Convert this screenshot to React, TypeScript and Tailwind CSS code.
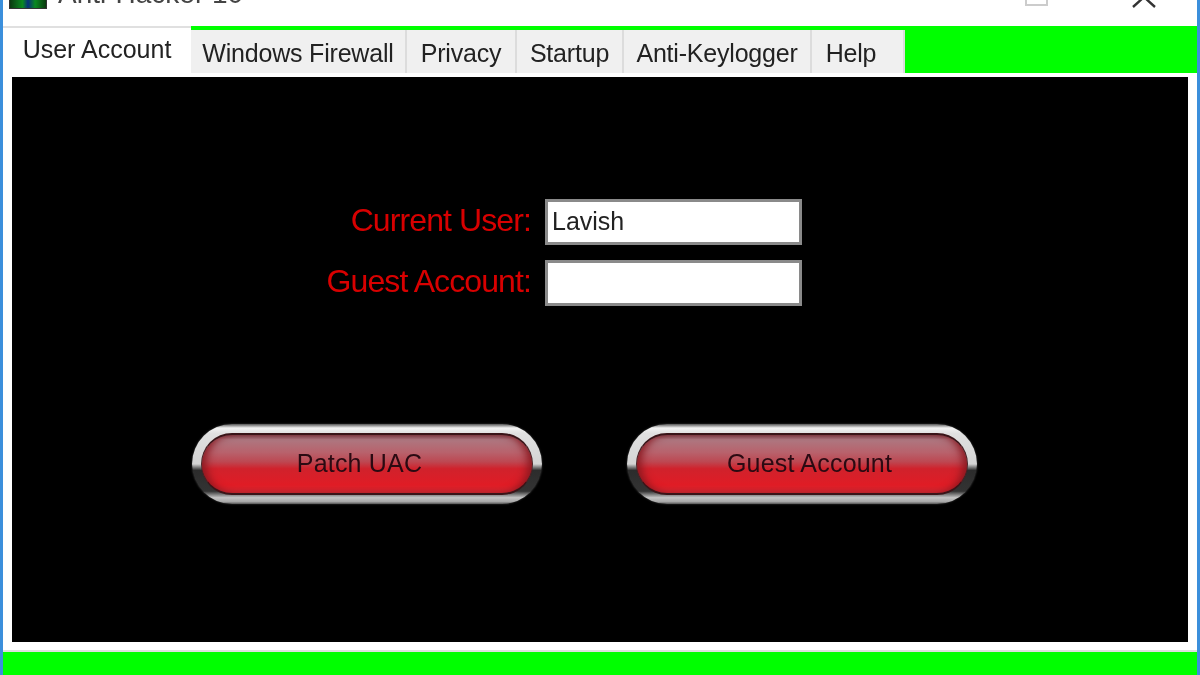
const tabs = [
  { label: "Windows Firewall", width: "w-[216px]", pad: "pr-0" },
  { label: "Privacy", width: "w-[110px]", pad: "pr-0" },
  { label: "Startup", width: "w-[107px]", pad: "pr-0" },
  { label: "Anti-Keylogger", width: "w-[188px]", pad: "pr-0" },
  { label: "Help", width: "w-[93px]", pad: "pr-[13px]" },
];

const GlossyButton = ({ label, className }: { label: string; className: string }) => (
  <button className="w-[350px] h-[80px] rounded-[40px] p-[9px] bg-[linear-gradient(180deg,#555_0%,#f2f2f2_5%,#e0e0e0_12%,#d4d4d4_50%,#2c2c2c_58%,#333_84%,#c4c4c4_92%,#a8a8a8_97%,#555_100%)] shadow-[0_0_2px_#444]">
    <span
      className={`flex items-center justify-center w-full h-full rounded-[31px] border-y-2 border-x border-y-[#3a1418] border-x-[#4a2024] bg-[linear-gradient(180deg,#7a4a52_0%,#ad7780_8%,#b8626c_30%,#bd4852_46%,#d0222c_58%,#e01c25_86%,#d02a32_100%)] shadow-[inset_8px_0_8px_-4px_#8a1820,inset_-8px_0_8px_-4px_#8a1820] text-[25px] tracking-[0.2px] text-[#2a0a12] ${className}`}
    >
      {label}
    </span>
  </button>
);

export default function App() {
  return (
    <div className="w-[1200px] h-[675px] overflow-hidden flex flex-col bg-white border-x-[3px] border-[#3b8fdc] font-['Liberation_Sans',sans-serif] blur-[0.5px]">
      <header className="h-[26px] shrink-0 relative overflow-hidden">
        <div className="absolute left-[6px] top-[-14px] w-[38px] h-[23px] border border-[#333] bg-[linear-gradient(90deg,#0a3a10,#0a8a20_35%,#06307a_50%,#0a8a20_70%,#0a3a10)]" />
        <span className="absolute left-[55px] top-[-24px] text-[28px] leading-[36px] text-[#444]">Anti-Hacker 10</span>
        <span className="absolute left-[1022px] top-[-15px] w-[23px] h-[21px] border-2 border-[#ccc]" />
        <svg className="absolute left-[1128px] top-[-9px]" width="26" height="18" viewBox="0 0 26 18">
          <path d="M2 16 L13 6 M24 16 L13 6 M8 0 L13 6 M18 0 L13 6" stroke="#333" strokeWidth="2.4" fill="none" />
        </svg>
      </header>

      <div className="flex-1 flex flex-col bg-[#00ff00]">
        <nav className="h-[47px] shrink-0 flex items-end text-[25px] leading-none text-[#222]">
          <div className="w-[188px] h-[49px] -mb-[2px] relative z-10 flex items-center justify-center pb-[4px] bg-white border-t-2 border-[#e0e0e0]">
            User Account
          </div>
          {tabs.map((tab) => (
            <div
              key={tab.label}
              className={`${tab.width} ${tab.pad} h-[43px] pt-[3px] flex items-center justify-center bg-[#f0f0f0] border-r-2 border-[#dcdcdc] tracking-[-0.2px]`}
            >
              {tab.label}
            </div>
          ))}
        </nav>

        <div className="h-[579px] shrink-0 bg-white pt-[4px] pb-[9px] px-[9px] border-b-2 border-[#dedede]">
          <main className="w-[1176px] h-[565px] bg-black pt-[122px] pl-[180px]">
            <div className="grid grid-cols-[339px_257px] gap-x-[14px] gap-y-[15px] items-center">
              <label className="h-[46px] leading-[42px] text-right text-[32px] text-[#d80000] tracking-[-0.9px]">Current User:</label>
              <div className="h-[46px] bg-white border-[3px] border-[#8a8a8a] flex items-center px-[4px] text-[25px] text-[#222]">
                Lavish
              </div>
              <label className="h-[46px] leading-[42px] text-right text-[32px] text-[#d80000] tracking-[-0.9px]">Guest Account:</label>
              <div className="h-[46px] bg-white border-[3px] border-[#8a8a8a]" />
            </div>
            <div className="flex gap-[85px] mt-[118px]">
              <GlossyButton label="Patch UAC" className="pr-[15px]" />
              <GlossyButton label="Guest Account" className="pl-[15px]" />
            </div>
          </main>
        </div>
      </div>
    </div>
  );
}
